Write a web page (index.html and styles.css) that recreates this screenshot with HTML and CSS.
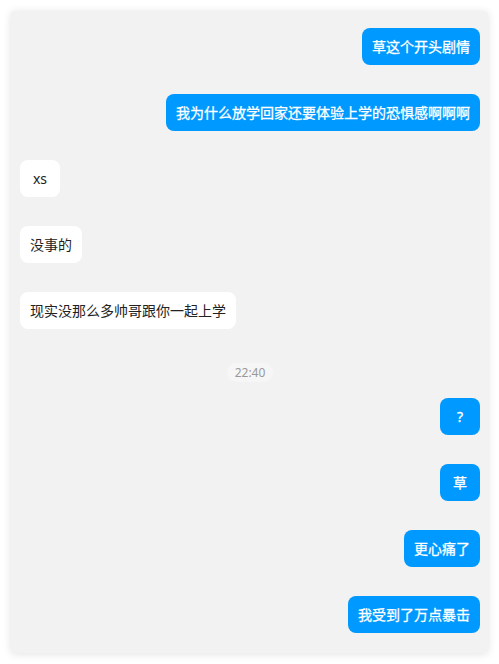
FILE: index.html
```html
<!DOCTYPE html>
<html lang="zh-CN">
<head>
  <meta charset="UTF-8" />
  <title>聊天记录</title>
  <meta name="viewport" content="width=device-width, initial-scale=1.0" />
  <link rel="stylesheet" href="styles.css">
</head>
<body>

  <div class="chat">
    <div class="msg right">草这个开头剧情</div>
    <div class="msg right">我为什么放学回家还要体验上学的恐惧感啊啊啊</div>
    <div class="msg left">xs</div>
    <div class="msg left">没事的</div>
    <div class="msg left">现实没那么多帅哥跟你一起上学</div>
    <div class="time">22:40</div>
    <div class="msg right">?</div>
    <div class="msg right">草</div>
    <div class="msg right">更心痛了</div>
    <div class="msg right">我受到了万点暴击</div>
  </div>

</body>
</html>
```

FILE: styles.css
```css
html, body {
  height: 100%;
}

body {
  margin: 0;
  padding: 11px;
  box-sizing: border-box;
  background: #fff;
  font-family: "Noto Sans", "Noto Sans CJK SC", sans-serif;
  font-size: 14px;
}

.chat {
  height: 100%;
  box-sizing: border-box;
  background: #f2f2f2;
  border-radius: 4px;
  box-shadow: 0 1px 8px rgba(0, 0, 0, 0.12);
  padding: 17px 8px 0 9px;
  display: flex;
  flex-direction: column;
}

.msg {
  min-width: 40px;
  box-sizing: border-box;
  padding: 10px;
  line-height: 17px;
  border-radius: 8px;
  text-align: center;
  margin-top: 29px;
}

.msg:first-child {
  margin-top: 0;
}

.msg.left {
  align-self: flex-start;
  background: #fff;
  color: #222;
}

.msg.right {
  align-self: flex-end;
  background: #0099ff;
  color: #fff;
  -webkit-text-stroke: 0.3px #fff;
}

.time {
  align-self: center;
  margin-top: 34px;
  padding: 0 8px;
  line-height: 19px;
  font-size: 12px;
  color: #999;
  background: #f6f6f6;
  border-radius: 10px;
}

.time + .msg {
  margin-top: 16px;
}
```
